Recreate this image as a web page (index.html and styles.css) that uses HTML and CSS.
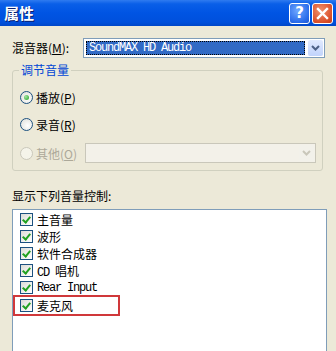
FILE: index.html
```html
<!DOCTYPE html>
<html>
<head>
<meta charset="utf-8">
<link rel="stylesheet" href="styles.css">
</head>
<body>
<div class="window">
  <div class="titlebar">
    <span class="title">属性</span>
    <div class="tbtns">
      <span class="tbtn help">?</span>
      <span class="tbtn close"><svg width="13" height="13" viewBox="0 0 13 13"><path d="M2 2L11 11M11 2L2 11" stroke="#fff" stroke-width="2.4" stroke-linecap="square"/></svg></span>
    </div>
  </div>
  <div class="content">
    <div class="mixer-row">
      <span class="lbl">混音器(<u>M</u>):</span>
      <div class="combo">
        <div class="combo-val"><span class="sel">SoundMAX HD Audio</span></div>
        <div class="combo-btn"><svg width="9" height="6" viewBox="0 0 9 6"><path d="M1 1L4.5 4.5L8 1" stroke="#4D6185" stroke-width="2" fill="none"/></svg></div>
      </div>
    </div>
    <fieldset class="group">
      <legend>调节音量</legend>
      <div class="radio-row r1"><span class="radio on"></span><span class="rl">播放(<u>P</u>)</span></div>
      <div class="radio-row r2"><span class="radio"></span><span class="rl">录音(<u>R</u>)</span></div>
      <div class="radio-row r3 disabled"><span class="radio dis"></span><span class="rl">其他(<u>O</u>)</span>
        <div class="combo dcombo"><div class="combo-val"></div><div class="combo-btn dbtn"><svg width="9" height="6" viewBox="0 0 9 6"><path d="M1 1L4.5 4.5L8 1" stroke="#C9C7BA" stroke-width="2" fill="none"/></svg></div></div>
      </div>
    </fieldset>
    <div class="list-lbl">显示下列音量控制:</div>
    <div class="list">
      <div class="item"><span class="cb"></span><span>主音量</span></div>
      <div class="item"><span class="cb"></span><span>波形</span></div>
      <div class="item"><span class="cb"></span><span>软件合成器</span></div>
      <div class="item"><span class="cb"></span><span><span class="mono cd">CD</span>唱机</span></div>
      <div class="item"><span class="cb"></span><span class="mono">Rear Input</span></div>
      <div class="item hl"><span class="cb"></span><span>麦克风</span></div>
    </div>
  </div>
</div>
</body>
</html>
```
FILE: styles.css
```css
html, body { margin: 0; padding: 0; }
body {
  width: 336px; height: 351px; overflow: hidden;
  background: #ECE9D8;
  font-family: "Noto Sans CJK SC", "DejaVu Sans", sans-serif;
  font-size: 12px; color: #000;
}
u { text-decoration: underline; }
.window { width: 336px; height: 351px; display: flex; flex-direction: column; }
.titlebar {
  height: 26px; flex: none;
  background: linear-gradient(#2F7BF0 0%, #0A5FE8 15%, #0054E3 50%, #0050DC 85%, #0047C8 100%);
  display: flex; align-items: center; justify-content: space-between;
  padding: 0 3px 0 4px;
}
.title {
  color: #fff; font-weight: bold; font-size: 15px;
  text-shadow: 1px 1px 0 #0A1E6E;
  line-height: 20px;
}
.tbtns { display: flex; gap: 2px; }
.tbtn {
  width: 19px; height: 19px; border: 1px solid #fff; border-radius: 3px;
  display: flex; align-items: center; justify-content: center;
  color: #fff; font: bold 15px "DejaVu Sans", sans-serif;
}
.help { background: radial-gradient(circle at 40% 35%, #6FA8FF, #2A6BEA 70%, #1E56D0); }
.close { background: radial-gradient(circle at 40% 35%, #F0926E, #DA4F2A 70%, #C23C18); }
.content { padding: 12px 11px 0 12px; flex: 1; display: flex; flex-direction: column; min-height: 0; }
.mixer-row { display: flex; align-items: center; height: 20px; justify-content: space-between; flex: none; }
.lbl { line-height: 20px; }
.combo {
  width: 240px; height: 18px; border: 1px solid #7F9DB9; background: #fff;
  display: flex; flex: none;
}
.combo-val { flex: 1; padding: 2px; display: flex; }
.sel {
  flex: 1; background: #316AC5; color: #fff; outline: 1px dotted #000; outline-offset: -1px;
  font: 12px/14px "Liberation Mono", monospace; letter-spacing: -1.2px; padding-left: 3px;
}
.combo-btn {
  width: 15px; margin: 1px; border-radius: 2px;
  background: linear-gradient(#E1EAFE, #C1D3FB);
  display: flex; align-items: center; justify-content: center;
}
.group {
  flex: none;
  margin: 4px 2px 0 0; padding: 0 6px 0 7px; height: 109px;
  border: 1px solid #D0D0BF; border-radius: 3px;
  box-sizing: border-box; min-width: 0;
}
.group legend { color: #0046D5; padding: 0 2px; margin-left: -1px; line-height: 16px; }
.radio-row { display: flex; align-items: center; height: 16px; white-space: nowrap; }
.rl { margin-left: 3px; }
.r1 { margin-top: 11px; }
.r2 { margin-top: 11px; }
.r3 { margin-top: 11px; height: 20px; }
.radio {
  width: 11px; height: 11px; border: 1px solid #1C5180; border-radius: 50%;
  background: radial-gradient(circle at 60% 60%, #fff, #DCDCD6);
  display: flex; align-items: center; justify-content: center; flex: none;
}
.radio.on::after {
  content: ""; width: 5px; height: 5px; border-radius: 50%;
  background: radial-gradient(circle at 35% 35%, #A3E3A3, #21A121);
}
.radio.dis { border-color: #CAC8BB; background: #F5F4EA; }
.disabled { color: #ACA899; }
.dcombo {
  width: 229px; height: 18px; border-color: #C9C7BA; background: #F3F1E9;
  margin-left: auto;
}
.dbtn { background: #F2F1EA; }
.list-lbl { margin-top: 18px; line-height: 14px; flex: none; }
.list {
  margin-top: 6px; margin-right: -2px; flex: 1; background: #fff; border: 1px solid #7F9DB9; border-bottom: none;
  padding: 1px 0 0 7px;
}
.item { display: flex; align-items: center; gap: 4px; height: 17px; width: 98px; white-space: nowrap; }
.cb {
  width: 11px; height: 11px; border: 1px solid #1C5180;
  background: linear-gradient(135deg, #DCDCD7, #fff);
  position: relative; flex: none;
}
.cb::after {
  content: ""; position: absolute; left: 3px; top: 1px; width: 3px; height: 6px;
  border: solid #21A121; border-width: 0 2px 2px 0; transform: rotate(40deg);
}
.mono { font: 12px "Liberation Mono", monospace; letter-spacing: -1.2px; }
.cd { margin-right: 6px; }
.hl { outline: 2px solid #D0383A; margin-left: -5px; padding-left: 5px; margin-top: 1px; }
```
